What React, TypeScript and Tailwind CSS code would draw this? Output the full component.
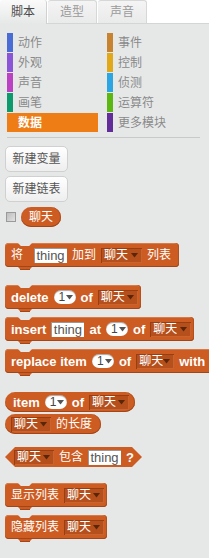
import React from "react";

const FONT = "font-['Liberation_Sans','Noto_Sans_CJK_SC',sans-serif]";
const BLK = "bg-[#cd5c22]";

function Cjk({ children, className = "" }: { children: React.ReactNode; className?: string }) {
  return <span className={`text-[12px] font-normal leading-none text-white ${className}`}>{children}</span>;
}

function Word({ children }: { children: React.ReactNode }) {
  return <span className="text-[13px] font-bold leading-none text-white">{children}</span>;
}

function Arrow({ color = "#5a260a" }: { color?: string }) {
  return (
    <svg width="7" height="5" viewBox="0 0 7 5" className="shrink-0">
      <polygon points="0,0 7,0 3.5,4.5" fill={color} />
    </svg>
  );
}

function Drop({ w = 40 }: { w?: number }) {
  return (
    <div
      className="h-[15px] flex items-center justify-between pl-[3px] pr-[4px] bg-[#b54f1c] shadow-[inset_1px_1px_0_#973f13,inset_-1px_-1px_0_#c86430] shrink-0"
      style={{ width: w }}
    >
      <span className="text-[12px] leading-none text-white font-normal">聊天</span>
      <Arrow />
    </div>
  );
}

function Num() {
  return (
    <div className="h-[14px] w-[22px] rounded-full bg-white flex items-center pl-[5px] gap-[1px] shadow-[inset_0_1px_1px_rgba(0,0,0,0.35)] shrink-0">
      <span className="text-[12px] leading-none text-[#444]">1</span>
      <Arrow color="#555" />
    </div>
  );
}

function Text({ w = 33 }: { w?: number }) {
  return (
    <div
      className="h-[15px] bg-white flex items-center justify-center shadow-[inset_1px_1px_0_#999] shrink-0"
      style={{ width: w }}
    >
      <span className="text-[13px] leading-none text-[#555] font-normal">thing</span>
    </div>
  );
}

function Stack({ children, className = "" }: { children: React.ReactNode; className?: string }) {
  return (
    <div className={`relative shrink-0 ${className}`}>
      <div
        className={`h-[24px] rounded-[4px] ${BLK} flex items-center gap-[5px] pl-[6px] pr-[3px] whitespace-nowrap shadow-[inset_0_-1px_0_#a2461a,inset_-1px_0_0_#b2511e,inset_0_1px_0_#dc7a45]`}
      >
        {children}
      </div>
      <div className="absolute left-[13px] top-0 w-[14px] h-[3px] bg-[#e6e8e8] [clip-path:polygon(0_0,100%_0,80%_100%,20%_100%)]" />
      <div className={`absolute left-[13px] top-[24px] w-[14px] h-[3px] ${BLK} [clip-path:polygon(0_0,100%_0,80%_100%,20%_100%)]`} />
      <div className="absolute left-[15px] top-[26px] w-[10px] h-px bg-[#a2461a]" />
    </div>
  );
}

function Reporter({ children, className = "" }: { children: React.ReactNode; className?: string }) {
  return (
    <div
      className={`h-[20px] rounded-full ${BLK} flex items-center gap-[5px] whitespace-nowrap shadow-[inset_0_-1px_0_#a2461a,inset_-1px_0_0_#b2511e] shrink-0 ${className}`}
    >
      {children}
    </div>
  );
}

const cats: [string, string, string, string][] = [
  ["动作", "#4a6cd4", "事件", "#c88330"],
  ["外观", "#8a55d7", "控制", "#e1a91a"],
  ["声音", "#bb42c3", "侦测", "#2ca5e2"],
  ["画笔", "#0e9a6c", "运算符", "#5cb712"],
  ["数据", "#ee7d16", "更多模块", "#632d99"],
];

function Cat({ label, color, selected }: { label: string; color: string; selected?: boolean }) {
  return (
    <div className={`h-[19px] flex items-center ${selected ? "bg-[#ee7d16]" : ""}`}>
      <div className="w-[6px] h-full" style={{ backgroundColor: color }} />
      <span
        className={`ml-[5px] text-[12px] leading-none ${selected ? "text-white font-bold" : "text-[#8a8a8a]"}`}
      >
        {label}
      </span>
    </div>
  );
}

export default function App() {
  return (
    <div className={`w-[209px] h-[558px] overflow-hidden bg-[#e6e8e8] ${FONT}`}>
      {/* tabs */}
      <div className="flex h-[24px] bg-white border-b border-[#d4d6d6]">
        <div className="w-[47px] h-[24px] -mb-px bg-gradient-to-b from-[#fafafa] to-[#e6e8e8] rounded-t-[3px] border-r border-[#d0d2d2] flex items-center justify-center text-[12px] text-[#4a4a4a]">
          脚本
        </div>
        <div className="ml-px w-[49px] h-full bg-gradient-to-b from-[#f4f4f4] to-[#e9eaea] rounded-t-[3px] border-r border-t border-[#d6d8d8] flex items-center justify-center text-[12px] text-[#9a9a9a]">
          造型
        </div>
        <div className="ml-px w-[49px] h-full bg-gradient-to-b from-[#f4f4f4] to-[#e9eaea] rounded-t-[3px] border-r border-t border-[#d6d8d8] flex items-center justify-center text-[12px] text-[#9a9a9a]">
          声音
        </div>
      </div>

      {/* categories */}
      <div className="mt-[9px] pl-[7px] grid grid-cols-[91px_93px] gap-x-[9px] gap-y-px">
        {cats.map(([a, ca, b, cb]) => (
          <React.Fragment key={a}>
            <Cat label={a} color={ca} selected={a === "数据"} />
            <Cat label={b} color={cb} />
          </React.Fragment>
        ))}
      </div>
      <div className="mt-[5px] ml-[7px] w-[193px] h-px bg-[#c8caca]" />

      <div className="pl-[5px] flex flex-col items-start">
        <div className="mt-[8px] w-[63px] h-[26px] rounded-[5px] border border-[#cfd1d1] bg-gradient-to-b from-white to-[#eeeeee] flex items-center justify-center text-[12px] text-[#555]">
          新建变量
        </div>
        <div className="mt-[4px] w-[63px] h-[26px] rounded-[5px] border border-[#cfd1d1] bg-gradient-to-b from-white to-[#eeeeee] flex items-center justify-center text-[12px] text-[#555]">
          新建链表
        </div>

        <div className="mt-[5px] flex items-center">
          <div className="ml-px w-[10px] h-[10px] border border-[#9a9a9a] bg-gradient-to-br from-[#bdbdbd] to-[#e2e2e2]" />
          <Reporter className="ml-[5px] w-[40px] justify-center">
            <Cjk>聊天</Cjk>
          </Reporter>
        </div>

        <Stack className="mt-[16px]">
          <Cjk className="mr-[6px]">将</Cjk>
          <Text />
          <Cjk>加到</Cjk>
          <Drop w={41} />
          <Cjk className="mr-[5px]">列表</Cjk>
        </Stack>

        <Stack className="mt-[18px]">
          <Word>delete</Word>
          <Num />
          <Word>of</Word>
          <Drop />
        </Stack>

        <Stack className="mt-[8px]">
          <Word>insert</Word>
          <Text />
          <Word>at</Word>
          <Num />
          <Word>of</Word>
          <Drop w={41} />
        </Stack>

        <Stack className="mt-[8px]">
          <Word>replace item</Word>
          <Num />
          <Word>of</Word>
          <Drop w={38} />
          <Word>with</Word>
          <Text />
        </Stack>

        <Reporter className="mt-[19px] pl-[8px] pr-[6px]">
          <Word>item</Word>
          <Num />
          <Word>of</Word>
          <Drop />
        </Reporter>

        <Reporter className="mt-[2px] pl-[6px] pr-[9px]">
          <Drop />
          <Cjk>的长度</Cjk>
        </Reporter>

        <div className={`mt-[13px] h-[20px] w-[137px] ${BLK} [clip-path:polygon(0_50%,10px_0,calc(100%-10px)_0,100%_50%,calc(100%-10px)_100%,10px_100%)] flex items-center gap-[5px] pl-[9px]`}>
          <Drop />
          <Cjk>包含</Cjk>
          <Text />
          <Word>?</Word>
        </div>

        <Stack className="mt-[16px]">
          <Cjk>显示列表</Cjk>
          <Drop />
        </Stack>

        <Stack className="mt-[8px]">
          <Cjk>隐藏列表</Cjk>
          <Drop />
        </Stack>
      </div>
    </div>
  );
}
